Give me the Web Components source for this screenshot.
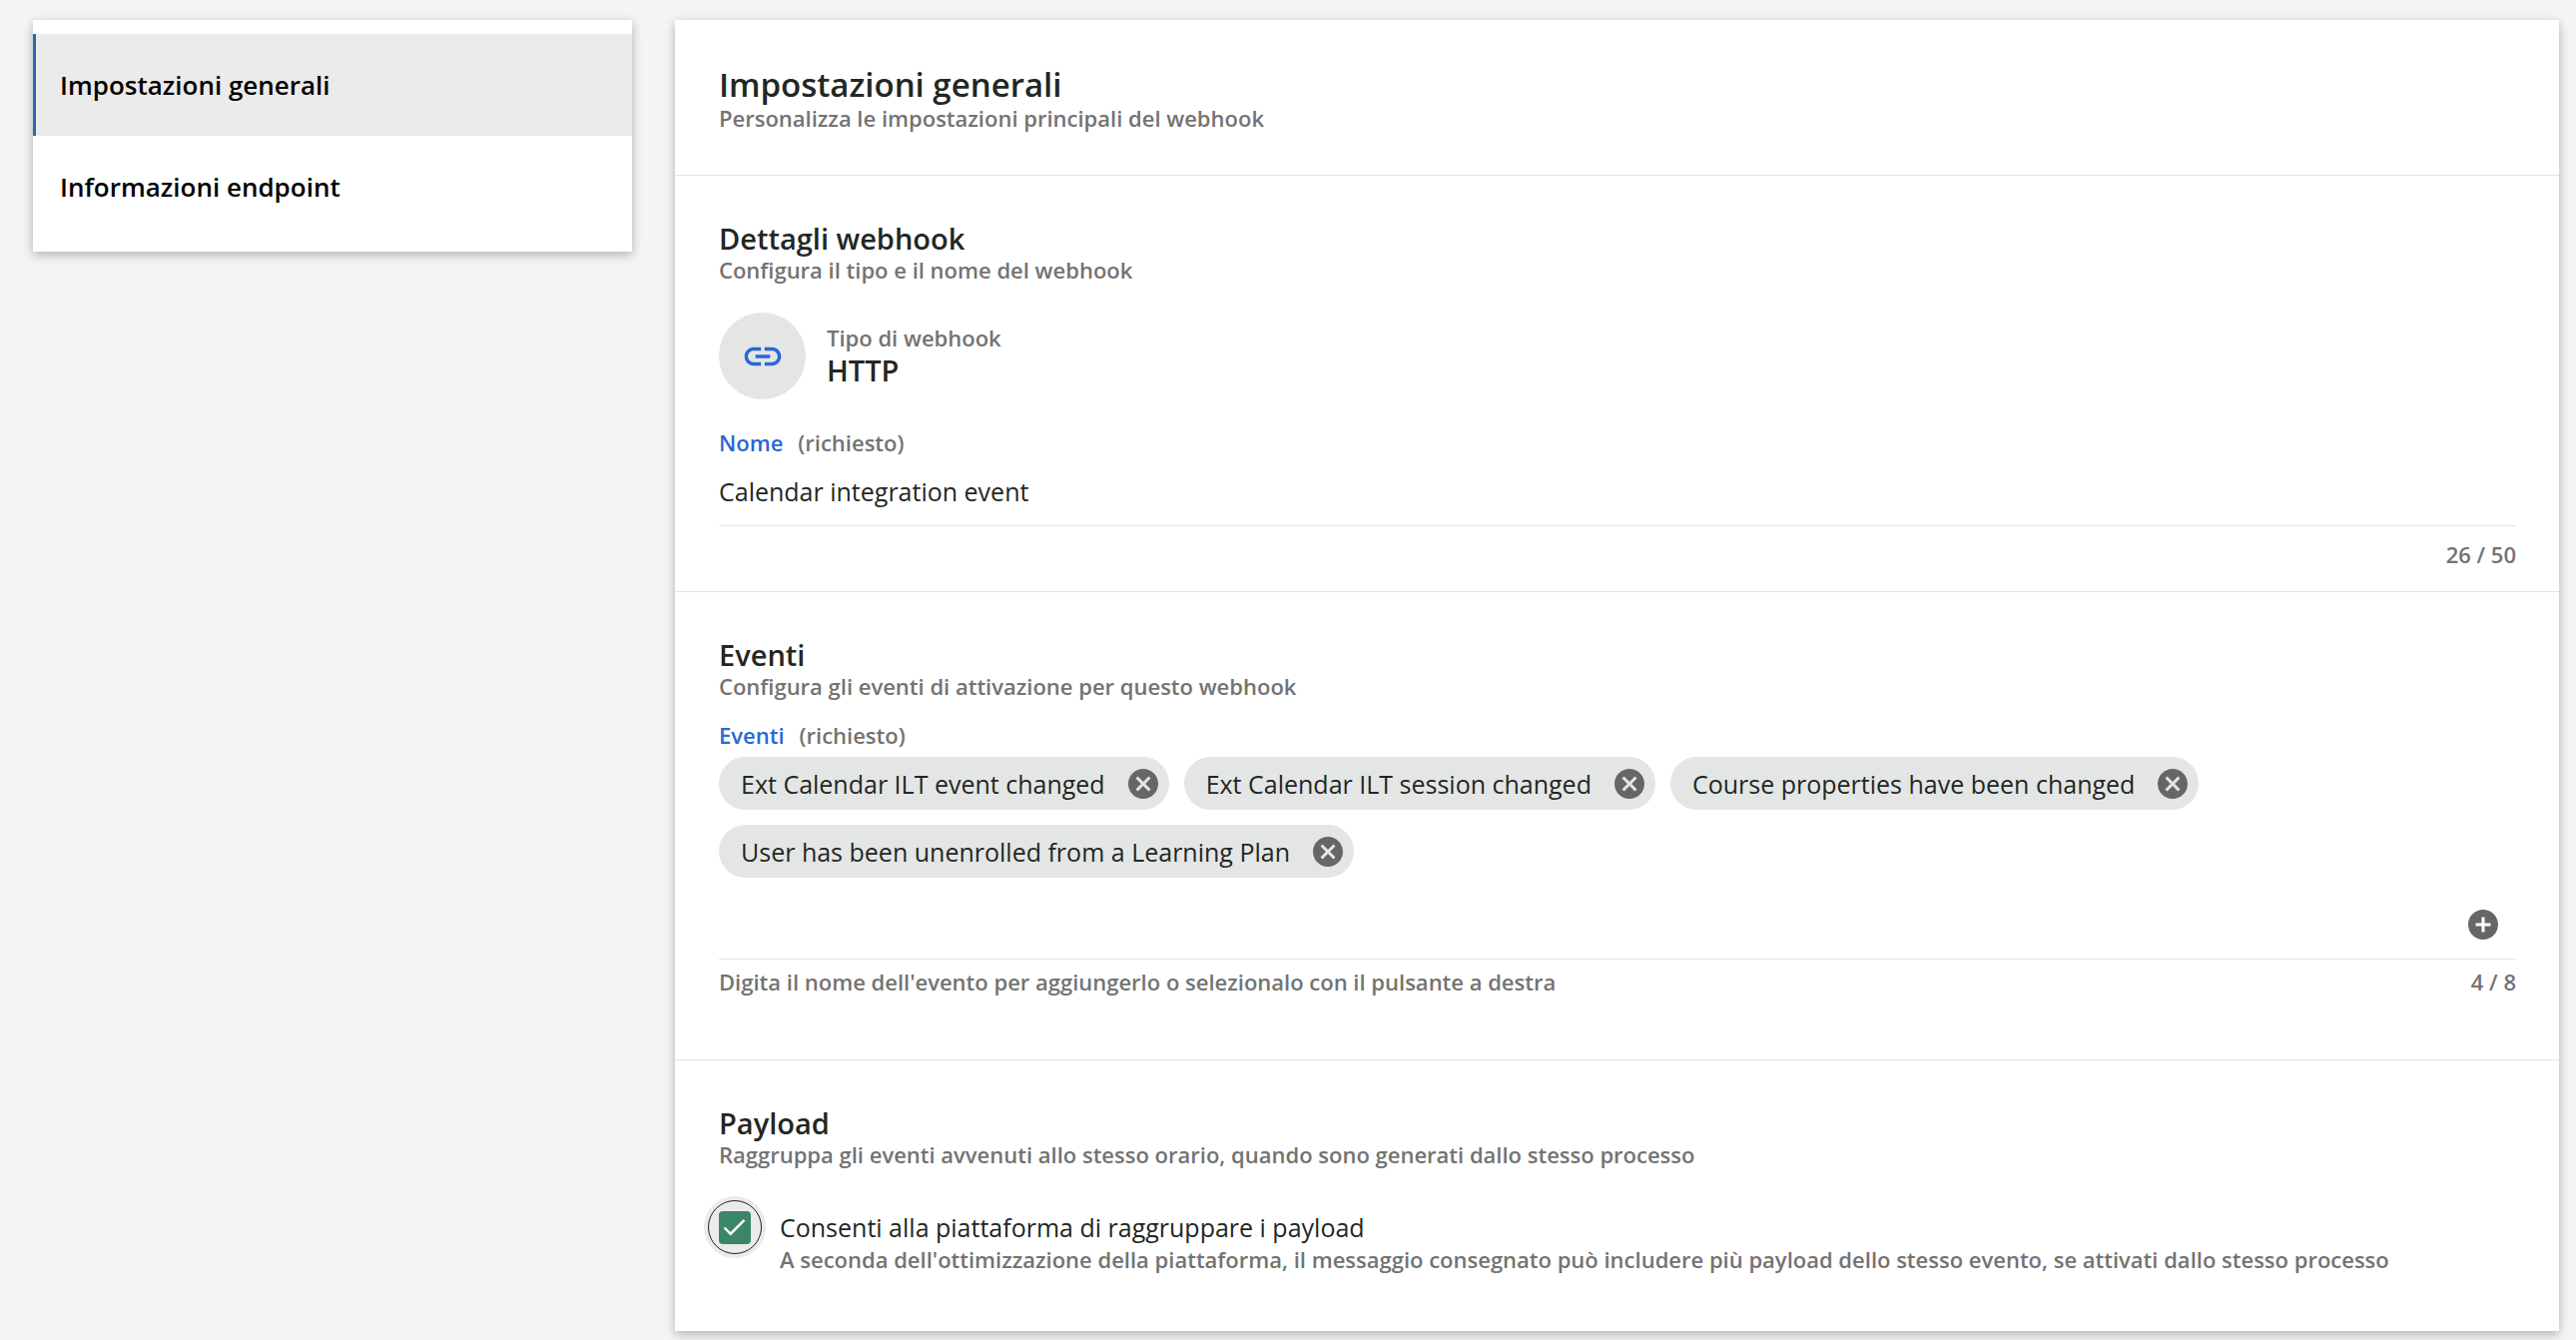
<!DOCTYPE html>
<html lang="it">
<head>
<meta charset="utf-8">
<meta name="viewport" content="width=device-width, initial-scale=1">
<title>Impostazioni generali</title>
<style>
  html { background: #f4f4f4; }
  body { margin: 0; font-family: "Open Sans", "Noto Sans", sans-serif; font-size: 25px; color: #222723; }
</style>
</head>
<body>
<settings-page>
  <side-nav slot="nav">
    <nav-item href="#generali" current>Impostazioni generali</nav-item>
    <nav-item href="#endpoint">Informazioni endpoint</nav-item>
  </side-nav>
  <settings-card>
    <settings-section level="1" heading="Impostazioni generali" description="Personalizza le impostazioni principali del webhook"></settings-section>
    <settings-section heading="Dettagli webhook" description="Configura il tipo e il nome del webhook">
      <webhook-type label="Tipo di webhook">HTTP</webhook-type>
      <text-field label="Nome" value="Calendar integration event" max="50"></text-field>
    </settings-section>
    <settings-section heading="Eventi" description="Configura gli eventi di attivazione per questo webhook">
      <chips-field label="Eventi" hint="Digita il nome dell'evento per aggiungerlo o selezionalo con il pulsante a destra" count="4 / 8">
        <event-chip>Ext Calendar ILT event changed</event-chip>
        <event-chip>Ext Calendar ILT session changed</event-chip>
        <event-chip>Course properties have been changed</event-chip>
        <event-chip>User has been unenrolled from a Learning Plan</event-chip>
      </chips-field>
    </settings-section>
    <settings-section heading="Payload" description="Raggruppa gli eventi avvenuti allo stesso orario, quando sono generati dallo stesso processo">
      <check-option label="Consenti alla piattaforma di raggruppare i payload" description="A seconda dell'ottimizzazione della piattaforma, il messaggio consegnato può includere più payload dello stesso evento, se attivati dallo stesso processo"></check-option>
    </settings-section>
  </settings-card>
</settings-page>

<script>
const BASE = `
  *, *::before, *::after { box-sizing: border-box; }
  h1, h2, p { margin: 0; }
  .small { font-size: 22px; line-height: 24px; font-weight: 600; color: #737373; }
  .label { display: flex; gap: 15px; }
  .label label { color: #2a67d5; }
  .foot { display: flex; justify-content: space-between; gap: 24px; }
  input, button { font: inherit; color: inherit; }
  button { display: block; padding: 0; border: 0; background: none; color: #666; cursor: pointer; }
  svg { display: block; fill: currentColor; }
`;

function define(name, css, markup) {
  customElements.define(name, class extends HTMLElement {
    connectedCallback() {
      if (this.shadowRoot) return;
      const get = key => this.getAttribute(key) || "";
      this.attachShadow({ mode: "open" }).innerHTML = `<style>${BASE}${css}</style>${markup(get, this)}`;
    }
  });
}

define("settings-page", `
  :host { display: grid; grid-template-columns: 600px minmax(0, 1fr); gap: 43px; align-items: start; padding: 20px 17px 9px 33px; }
`, () => `<slot name="nav"></slot><main><slot></slot></main>`);

const CARD = `background: #fff; box-shadow: 0 2px 10px rgba(0,0,0,.12), 0 4px 10px rgba(0,0,0,.16);`;

define("side-nav", `
  :host { display: block; ${CARD} }
  nav { padding: 14px 0; }
`, () => `<nav aria-label="Impostazioni"><slot></slot></nav>`);

define("nav-item", `
  :host { display: block; }
  a { display: flex; align-items: center; height: 102px; padding: 0 24px; border-left: 3px solid transparent; color: #000; font-size: 26px; font-weight: 600; text-decoration: none; }
  a[aria-current] { background: #ebebeb; border-left-color: #2a67ae; }
`, (get, el) => `<a href="${get("href")}" ${el.hasAttribute("current") ? 'aria-current="page"' : ""}><slot></slot></a>`);

define("settings-card", `
  :host { display: block; ${CARD} }
`, () => `<slot></slot>`);

define("settings-section", `
  :host { display: block; padding: 44px 43px 25px 44px; border-bottom: 1px solid #e2e3e3; }
  :host([level="1"]) { padding-bottom: 45px; }
  :host([heading="Eventi"]) { padding-bottom: 66px; }
  :host(:last-child) { padding-bottom: 60px; border-bottom: 0; }
  h1 { font-size: 33px; line-height: 42px; font-weight: 600; }
  h2 { font-size: 29px; line-height: 38px; font-weight: 600; }
`, get => {
  const tag = get("level") === "1" ? "h1" : "h2";
  return `<${tag}>${get("heading")}</${tag}><p class="small">${get("description")}</p><slot></slot>`;
});

define("webhook-type", `
  :host { display: flex; align-items: center; gap: 21px; margin-top: 31px; }
  .disc { display: grid; place-items: center; width: 87px; height: 87px; border-radius: 50%; background: #e4e6e5; color: #2a67d5; }
  .text { padding-top: 4px; }
  .value { font-size: 29px; line-height: 42px; font-weight: 600; }
`, get => `
  <div class="disc"><svg width="44" height="44" viewBox="0 0 24 24" aria-hidden="true"><path d="M3.9 12c0-1.71 1.39-3.1 3.1-3.1h4V7H7c-2.76 0-5 2.24-5 5s2.24 5 5 5h4v-1.900H7c-1.710 0-3.100-1.390-3.100-3.100zM8 13h8v-2H8v2zm9-6h-4v1.900h4c1.710 0 3.100 1.390 3.100 3.100s-1.390 3.100-3.100 3.100h-4V17h4c2.760 0 5-2.240 5-5s-2.240-5-5-5z"/></svg></div>
  <div class="text"><p class="small">${get("label")}</p><p class="value"><slot></slot></p></div>`);

define("text-field", `
  :host { display: block; margin-top: 31px; }
  input { display: block; width: 100%; height: 72px; padding: 2px 0 0; border: 0; border-bottom: 1px solid #e2e3e3; background: none; outline: 0; }
  .foot { justify-content: flex-end; margin-top: 16px; }
`, get => `
  <div class="small label"><label for="field">${get("label")}</label><span>(richiesto)</span></div>
  <input id="field" type="text" maxlength="${get("max")}" value="${get("value")}">
  <div class="small foot"><span>${get("value").length} / ${get("max")}</span></div>`);

define("event-chip", `
  :host { display: flex; align-items: center; gap: 20px; height: 53px; padding: 0 8px 0 22px; border-radius: 27px; background: #e4e6e5; }
`, () => `
  <span><slot></slot></span>
  <button type="button" aria-label="Rimuovi"><svg width="36" height="36" viewBox="0 0 24 24" aria-hidden="true"><path d="M12 2C6.470 2 2 6.470 2 12s4.470 10 10 10 10-4.470 10-10S17.530 2 12 2zm5 13.590L15.590 17 12 13.410 8.410 17 7 15.590 10.590 12 7 8.410 8.410 7 12 10.590 15.590 7 17 8.410 13.410 12 17 15.590z"/></svg></button>`);

define("chips-field", `
  :host { display: block; margin-top: 25px; }
  .chips { display: flex; flex-wrap: wrap; gap: 15px 15px; margin-top: 10px; padding-right: 100px; }
  .entry { display: flex; align-items: center; height: 70px; margin-top: 12px; padding-right: 15px; border-bottom: 1px solid #e2e3e3; }
  input { flex: 1; min-width: 0; height: 100%; padding: 0; border: 0; background: none; outline: 0; }
  .foot { margin-top: 10px; }
`, get => `
  <div class="small label"><label for="event">${get("label")}</label><span>(richiesto)</span></div>
  <div class="chips"><slot></slot></div>
  <div class="entry"><input id="event" type="text"><button type="button" aria-label="Aggiungi evento"><svg width="36" height="36" viewBox="0 0 24 24" aria-hidden="true"><path d="M12 2C6.480 2 2 6.480 2 12s4.480 10 10 10 10-4.480 10-10S17.520 2 12 2zm5 11h-4v4h-2v-4H7v-2h4V7h2v4h4v2z"/></svg></button></div>
  <div class="small foot"><span>${get("hint")}</span><span>${get("count")}</span></div>`);

define("check-option", `
  :host { display: grid; grid-template-columns: 32px minmax(0, 1fr); column-gap: 29px; align-items: center; margin-top: 41px; }
  .box { position: relative; display: grid; place-items: center; height: 40px; }
  .box > * { grid-area: 1 / 1; }
  .ring { position: absolute; left: -15px; top: -11px; width: 62px; height: 62px; border-radius: 50%; border: 4px solid #ebebeb; background: #ebebeb; }
  .ring::before { content: ""; display: block; height: 100%; border: 1px solid #222; border-radius: 50%; }
  input { position: relative; appearance: none; width: 32px; height: 33px; margin: 0; border-radius: 4px; border: 2px solid #737373; background: #fff; outline: 0; }
  input:checked { border-color: #3b8668; background: #3b8668; }
  svg { position: relative; fill: none; pointer-events: none; }
  input:not(:checked) + svg { visibility: hidden; }
  label { line-height: 40px; }
  .small { grid-column: 2; }
`, get => `
  <div class="box"><span class="ring"></span><input id="check" type="checkbox" checked aria-describedby="info"><svg width="32" height="32" viewBox="0 0 32 32" aria-hidden="true"><path d="M5.500 16.500l6.200 6.200L25.500 8.800" stroke="#fff" stroke-width="2.400"/></svg></div>
  <label for="check">${get("label")}</label>
  <p class="small" id="info">${get("description")}</p>`);
</script>
</body>
</html>
